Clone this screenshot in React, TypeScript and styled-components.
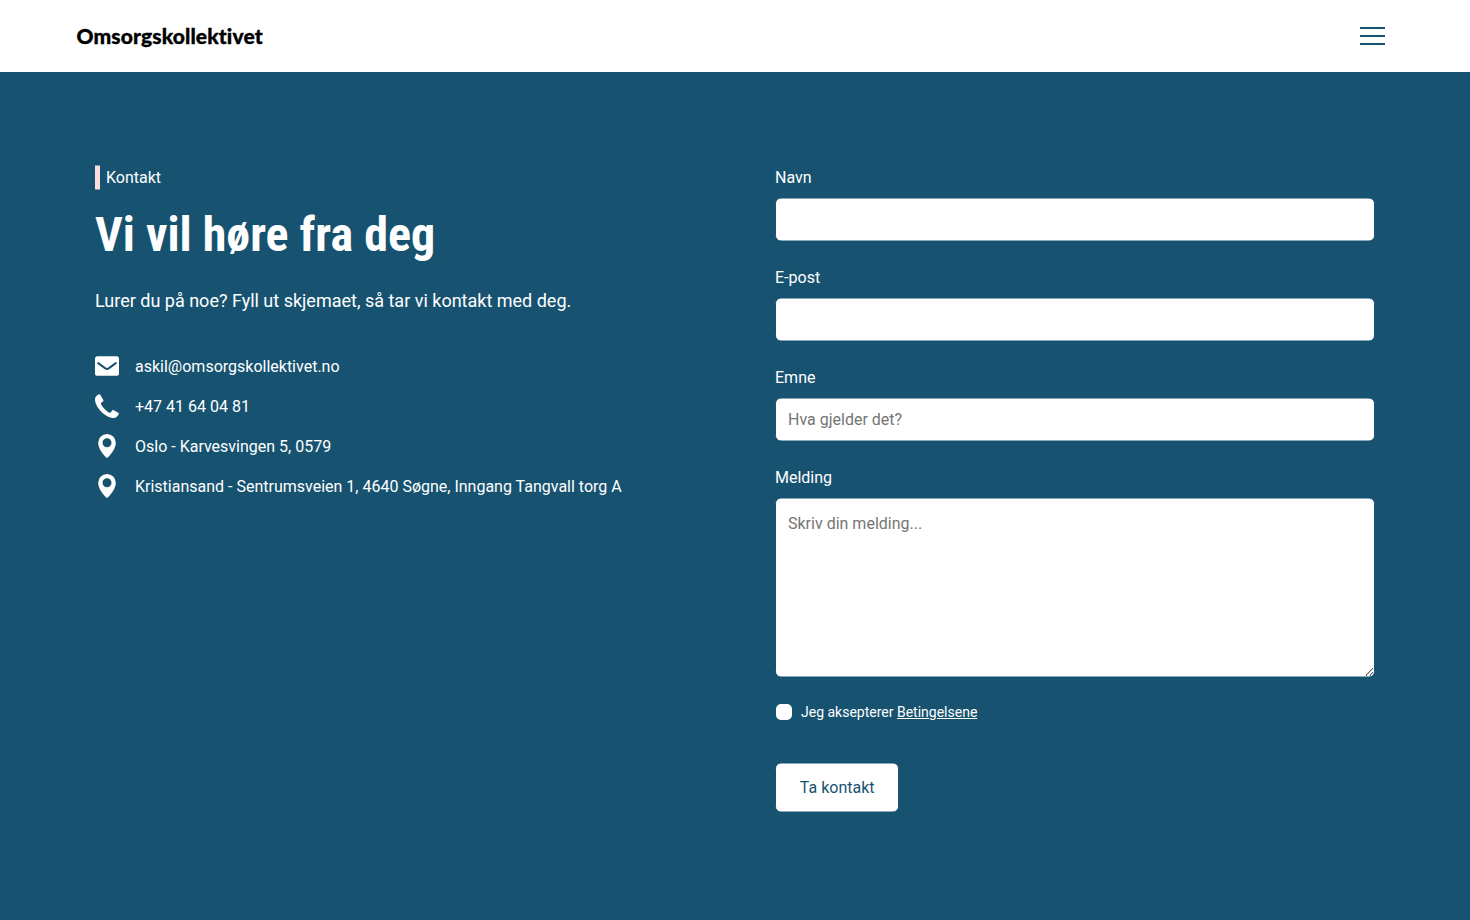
import React from "react";
import styled, { createGlobalStyle } from "styled-components";

const blue = "#175371";

const GlobalStyle = createGlobalStyle`
  * { box-sizing: border-box; }
  body {
    margin: 0;
    background: ${blue};
    color: #fff;
    font-family: Roboto, "Liberation Sans", sans-serif;
    font-size: 16px;
    line-height: 24px;
  }
`;

const Header = styled.header`
  display: flex;
  align-items: center;
  justify-content: space-between;
  height: 72px;
  padding: 0 85px 0 76px;
  background: #fff;
`;

const Logo = styled.a`
  color: #000;
  font-family: Lato, "Liberation Sans", sans-serif;
  font-size: 21px;
  font-weight: 900;
  font-variant-ligatures: none;
  letter-spacing: 0.12px;
  line-height: 30px;
  padding-left: 0.5px;
  -webkit-text-stroke: 0.35px #000;
  white-space: nowrap;
`;

const MenuButton = styled.button`
  display: flex;
  flex-direction: column;
  gap: 6px;
  width: 25px;
  padding: 0;
  border: 0;
  background: none;
`;

const MenuLine = styled.span`
  height: 2px;
  background: ${blue};
`;

const Contact = styled.main`
  display: grid;
  grid-template-columns: 600px 600px;
  column-gap: 80px;
  min-height: 848px;
  padding: 94px 95px 0;
`;

const Intro = styled.section`
  display: flex;
  flex-direction: column;
  align-items: flex-start;
`;

const Tagline = styled.div`
  padding-left: 6px;
  border-left: 5px solid #fddcde;
  transform: translateY(-0.5px);
`;

const Title = styled.h1`
  margin: 15px 0 23.4px;
  font-family: "Roboto Condensed", Roboto, sans-serif;
  font-size: 48px;
  font-stretch: 75%;
  font-weight: 700;
  line-height: 57.6px;
  white-space: nowrap;
  transform: translateY(0.5px);
`;

const Lead = styled.p`
  margin: 0;
  font-size: 18px;
  line-height: 27px;
  transform: translateY(0.5px);
`;

const ContactList = styled.ul`
  display: grid;
  gap: 16px;
  margin: 41px 0 0;
  padding: 0;
  list-style: none;
`;

const ContactItem = styled.li`
  display: flex;
  gap: 16px;
  white-space: nowrap;
`;

const ContactText = styled.span`
  transform: translateY(0.6px);
`;

const Icon = styled.svg`
  display: block;
  flex: none;
  width: 24px;
  height: 24px;
  fill: #fff;
`;

const Form = styled.form`
  display: flex;
  flex-direction: column;
  align-items: stretch;
`;

const Field = styled.label`
  display: flex;
  flex-direction: column;
  gap: 8px;
  margin-bottom: 24px;
`;

const Input = styled.input`
  width: 100%;
  height: 44px;
  padding: 8px 12px 10px;
  border: 1px solid ${blue};
  border-radius: 6px;
  background: #fff;
  color: ${blue};
  font: inherit;
  transform: translateY(-0.5px);
  &::placeholder { color: #757575; }
`;

const TextArea = styled.textarea`
  display: block;
  width: 100%;
  height: 180px;
  padding: 12.5px 12px 12px;
  border: 1px solid ${blue};
  border-radius: 6px;
  background: #fff;
  color: ${blue};
  font: inherit;
  resize: vertical;
  transform: translateY(-0.5px);
  &::placeholder { color: #757575; }
`;

const Consent = styled.label`
  display: flex;
  align-items: center;
  gap: 9px;
  height: 21px;
  margin: -0.5px 0 40.5px 1px;
  font-size: 14px;
  line-height: 21px;
`;

const Checkbox = styled.input`
  appearance: none;
  width: 16px;
  height: 16px;
  margin: 0;
  border-radius: 5px;
  background: #fff;
`;

const TermsLink = styled.a`
  text-decoration: underline;
`;

const Submit = styled.button`
  align-self: flex-start;
  width: 124.4px;
  height: 50px;
  padding: 0;
  border: 1px solid ${blue};
  border-radius: 6px;
  background: #fff;
  color: ${blue};
  font: inherit;
  transform: translateY(-0.5px);
`;

const MailIcon = () => (
  <Icon viewBox="0 0 24 24">
    <rect y="2.2" width="24" height="19.6" rx="2.6" />
    <path
      d="M3.200 9.100 10.300 14.400Q12 15.500 13.700 14.400L20.800 9.100"
      fill="none"
      stroke={blue}
      strokeWidth="2"
      strokeLinecap="round"
    />
  </Icon>
);

const PhoneIcon = () => (
  <Icon viewBox="0 0 24 24">
    <path d="M3.800.3C1.400 1.500 0 3.200 0 5.200 0 13.500 10.500 24 18.800 24c2 0 3.700-1.400 4.900-3.800.3-.6.100-1.100-.5-1.500l-4.500-2.500c-.6-.3-1.100-.2-1.500.3l-1.500 1.900c-.4.500-.9.600-1.500.3C11.300 17 7.500 13.200 6 10.300c-.3-.6-.2-1.100.3-1.500l1.700-1.400c.5-.4.600-.9.300-1.500L5.300.8C5 .2 4.400 0 3.800.3Z" />
  </Icon>
);

const PinIcon = () => (
  <Icon viewBox="0 0 24 24">
    <path
      fillRule="evenodd"
      d="M12 0a8.800 8.800 0 0 0-8.800 8.800C3.200 14.200 7.200 19.400 11.200 23.600q.8.700 1.600 0C16.800 19.400 20.800 14.200 20.800 8.800A8.800 8.800 0 0 0 12 0Zm0 4.200a4.500 4.500 0 1 1 0 9 4.500 4.500 0 0 1 0-9Z"
    />
  </Icon>
);

const contacts = [
  { icon: <MailIcon />, text: "askil@omsorgskollektivet.no" },
  { icon: <PhoneIcon />, text: "+47 41 64 04 81" },
  { icon: <PinIcon />, text: "Oslo - Karvesvingen 5, 0579" },
  { icon: <PinIcon />, text: "Kristiansand - Sentrumsveien 1, 4640 Søgne, Inngang Tangvall torg A" },
];

export default function App() {
  return (
    <>
      <GlobalStyle />
      <Header>
        <Logo>Omsorgskollektivet</Logo>
        <MenuButton aria-label="Meny">
          <MenuLine />
          <MenuLine />
          <MenuLine />
        </MenuButton>
      </Header>
      <Contact>
        <Intro>
          <Tagline>Kontakt</Tagline>
          <Title>Vi vil høre fra deg</Title>
          <Lead>Lurer du på noe? Fyll ut skjemaet, så tar vi kontakt med deg.</Lead>
          <ContactList>
            {contacts.map(({ icon, text }) => (
              <ContactItem key={text}>
                {icon}
                <ContactText>{text}</ContactText>
              </ContactItem>
            ))}
          </ContactList>
        </Intro>
        <Form>
          <Field>Navn<Input type="text" /></Field>
          <Field>E-post<Input type="email" /></Field>
          <Field>Emne<Input type="text" placeholder="Hva gjelder det?" /></Field>
          <Field>Melding<TextArea placeholder="Skriv din melding..." /></Field>
          <Consent>
            <Checkbox type="checkbox" />
            <span>Jeg aksepterer <TermsLink>Betingelsene</TermsLink></span>
          </Consent>
          <Submit type="button">Ta kontakt</Submit>
        </Form>
      </Contact>
    </>
  );
}
